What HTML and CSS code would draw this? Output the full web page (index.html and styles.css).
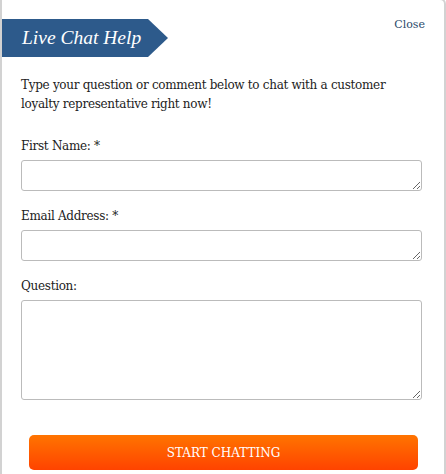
FILE: index.html
```html
<!DOCTYPE html>
<html>
<head>
<title>Live Chat Help</title>
<link rel="stylesheet" href="styles.css">
</head>
<body>
<div class="panel">
  <div class="head">
    <div class="banner">Live Chat Help</div>
    <a class="close" href="#">Close</a>
  </div>

  <form class="chat-form">
    <p class="intro">Type your question or comment below to chat with a customer loyalty representative right now!</p>

    <label class="field-label" for="fname">First Name: *</label>
    <textarea class="field" id="fname"></textarea>

    <label class="field-label" for="email">Email Address: *</label>
    <textarea class="field" id="email"></textarea>

    <label class="field-label" for="question">Question:</label>
    <textarea class="field field-big" id="question"></textarea>

    <button class="start" type="button">START CHATTING</button>
  </form>
</div>
</body>
</html>
```

FILE: styles.css
```css
/* Live chat popup */

body
{ margin: 0;
background: #fff;
font-family: "DejaVu Serif", Georgia, serif;
color: #222;
}

.panel
{ margin-top: -2px;
height: 480px;
border: 2px solid #d2d2d2;
border-radius: 0 6px 0 0;
background: #fff;
}

.head
{ display: flex;
justify-content: space-between;
align-items: flex-start;
}

.banner
{ margin-top: 19px;
width: 146px;
height: 38px;
padding-left: 20px;
line-height: 38px;
background-color: #2d5a8b;
color: #fff;
font-family: "Liberation Serif", "Times New Roman", serif;
font-size: 19.5px;
font-style: italic;
clip-path: polygon(0 0, 146px 0, 100% 50%, 146px 100%, 0 100%);
}

a.close
{ margin: 18px 19px 0 0;
font-size: 11px;
color: #2b4a6a;
text-decoration: none;
}

.chat-form
{ display: flex;
flex-direction: column;
padding: 0 22px 0 19px;
}

p.intro
{ margin: 19px 0 23px 0;
font-size: 12px;
letter-spacing: -0.3px;
line-height: 19px;
}

.field-label
{ font-size: 12px;
letter-spacing: -0.3px;
line-height: 19px;
margin-bottom: 4px;
}

textarea.field
{ box-sizing: border-box;
height: 31px;
margin: 0 0 16px 0;
padding: 4px;
border: 1px solid #bbb;
border-radius: 3px;
font-family: inherit;
resize: vertical;
}

textarea.field-big
{ height: 100px;
margin-bottom: 0;
}

button.start
{ margin: 35px 4px 0 8px;
height: 35px;
border: 0;
border-radius: 5px;
background: linear-gradient(#ff7400, #ff4300);
color: #fff;
font-family: inherit;
font-size: 12px;
}
```
